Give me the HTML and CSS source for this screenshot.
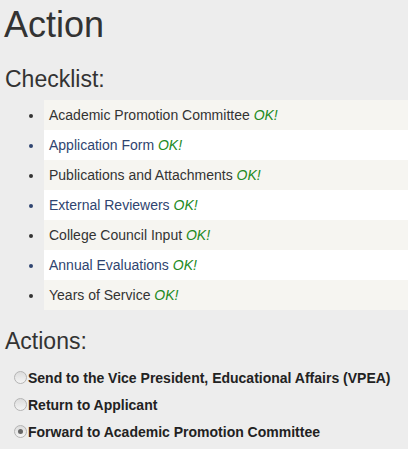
FILE: index.html
```html
<!DOCTYPE html>
<html>
<head>
<meta charset="utf-8">
<link rel="stylesheet" href="styles.css">
</head>
<body>
<h1 class="title">Action</h1>
<h2 class="section">Checklist:</h2>
<ul class="checklist">
  <li class="odd">Academic Promotion Committee <em class="ok">OK!</em></li>
  <li class="even">Application Form <em class="ok">OK!</em></li>
  <li class="odd">Publications and Attachments <em class="ok">OK!</em></li>
  <li class="even">External Reviewers <em class="ok">OK!</em></li>
  <li class="odd">College Council Input <em class="ok">OK!</em></li>
  <li class="even">Annual Evaluations <em class="ok">OK!</em></li>
  <li class="odd">Years of Service <em class="ok">OK!</em></li>
</ul>
<h2 class="section actions-title">Actions:</h2>
<div class="actions">
  <label class="option"><input class="radio" type="radio" name="act"><span>Send to the Vice President, Educational Affairs (VPEA)</span></label>
  <label class="option"><input class="radio" type="radio" name="act"><span>Return to Applicant</span></label>
  <label class="option"><input class="radio" type="radio" name="act" checked><span>Forward to Academic Promotion Committee</span></label>
</div>
</body>
</html>
```
FILE: styles.css
```css
html, body {
  margin: 0;
  padding: 0;
  background: #ededed;
}
body {
  font-family: "Liberation Sans", Arial, sans-serif;
  color: #333;
  padding: 0 0 0 4px;
}
.title {
  font-size: 36px;
  font-weight: normal;
  margin: 0;
  padding-top: 4px;
  line-height: 42px;
}
.section {
  font-size: 23px;
  font-weight: normal;
  margin: 0;
  line-height: 30px;
  padding-top: 18px;
  padding-left: 1px;
}
.checklist {
  list-style: disc;
  margin: 6px 0 0 0;
  padding: 0 0 0 40px;
}
.checklist li {
  height: 30px;
  line-height: 30px;
  font-size: 14px;
  padding-left: 5px;
}
.checklist li.odd {
  background: #f6f5f1;
  color: #333;
}
.checklist li.even {
  background: #ffffff;
  color: #2f4470;
}
.ok {
  color: #228a22;
}
.actions-title {
  padding-top: 16px;
}
.actions {
  display: flex;
  flex-direction: column;
  padding-left: 10px;
  margin-top: 8px;
}
.option {
  display: flex;
  align-items: center;
  height: 27px;
  font-size: 14px;
  font-weight: bold;
  color: #222;
}
.radio {
  appearance: none;
  -webkit-appearance: none;
  box-sizing: border-box;
  margin: 0 1px 0 0;
  width: 13px;
  height: 13px;
  border-radius: 50%;
  border: 1px solid #b4b4b4;
  background: linear-gradient(#dcdcdc, #f4f4f4);
  position: relative;
}
.radio:checked::after {
  content: "";
  position: absolute;
  left: 3px;
  top: 3px;
  width: 5px;
  height: 5px;
  border-radius: 50%;
  background: #666;
}
```
